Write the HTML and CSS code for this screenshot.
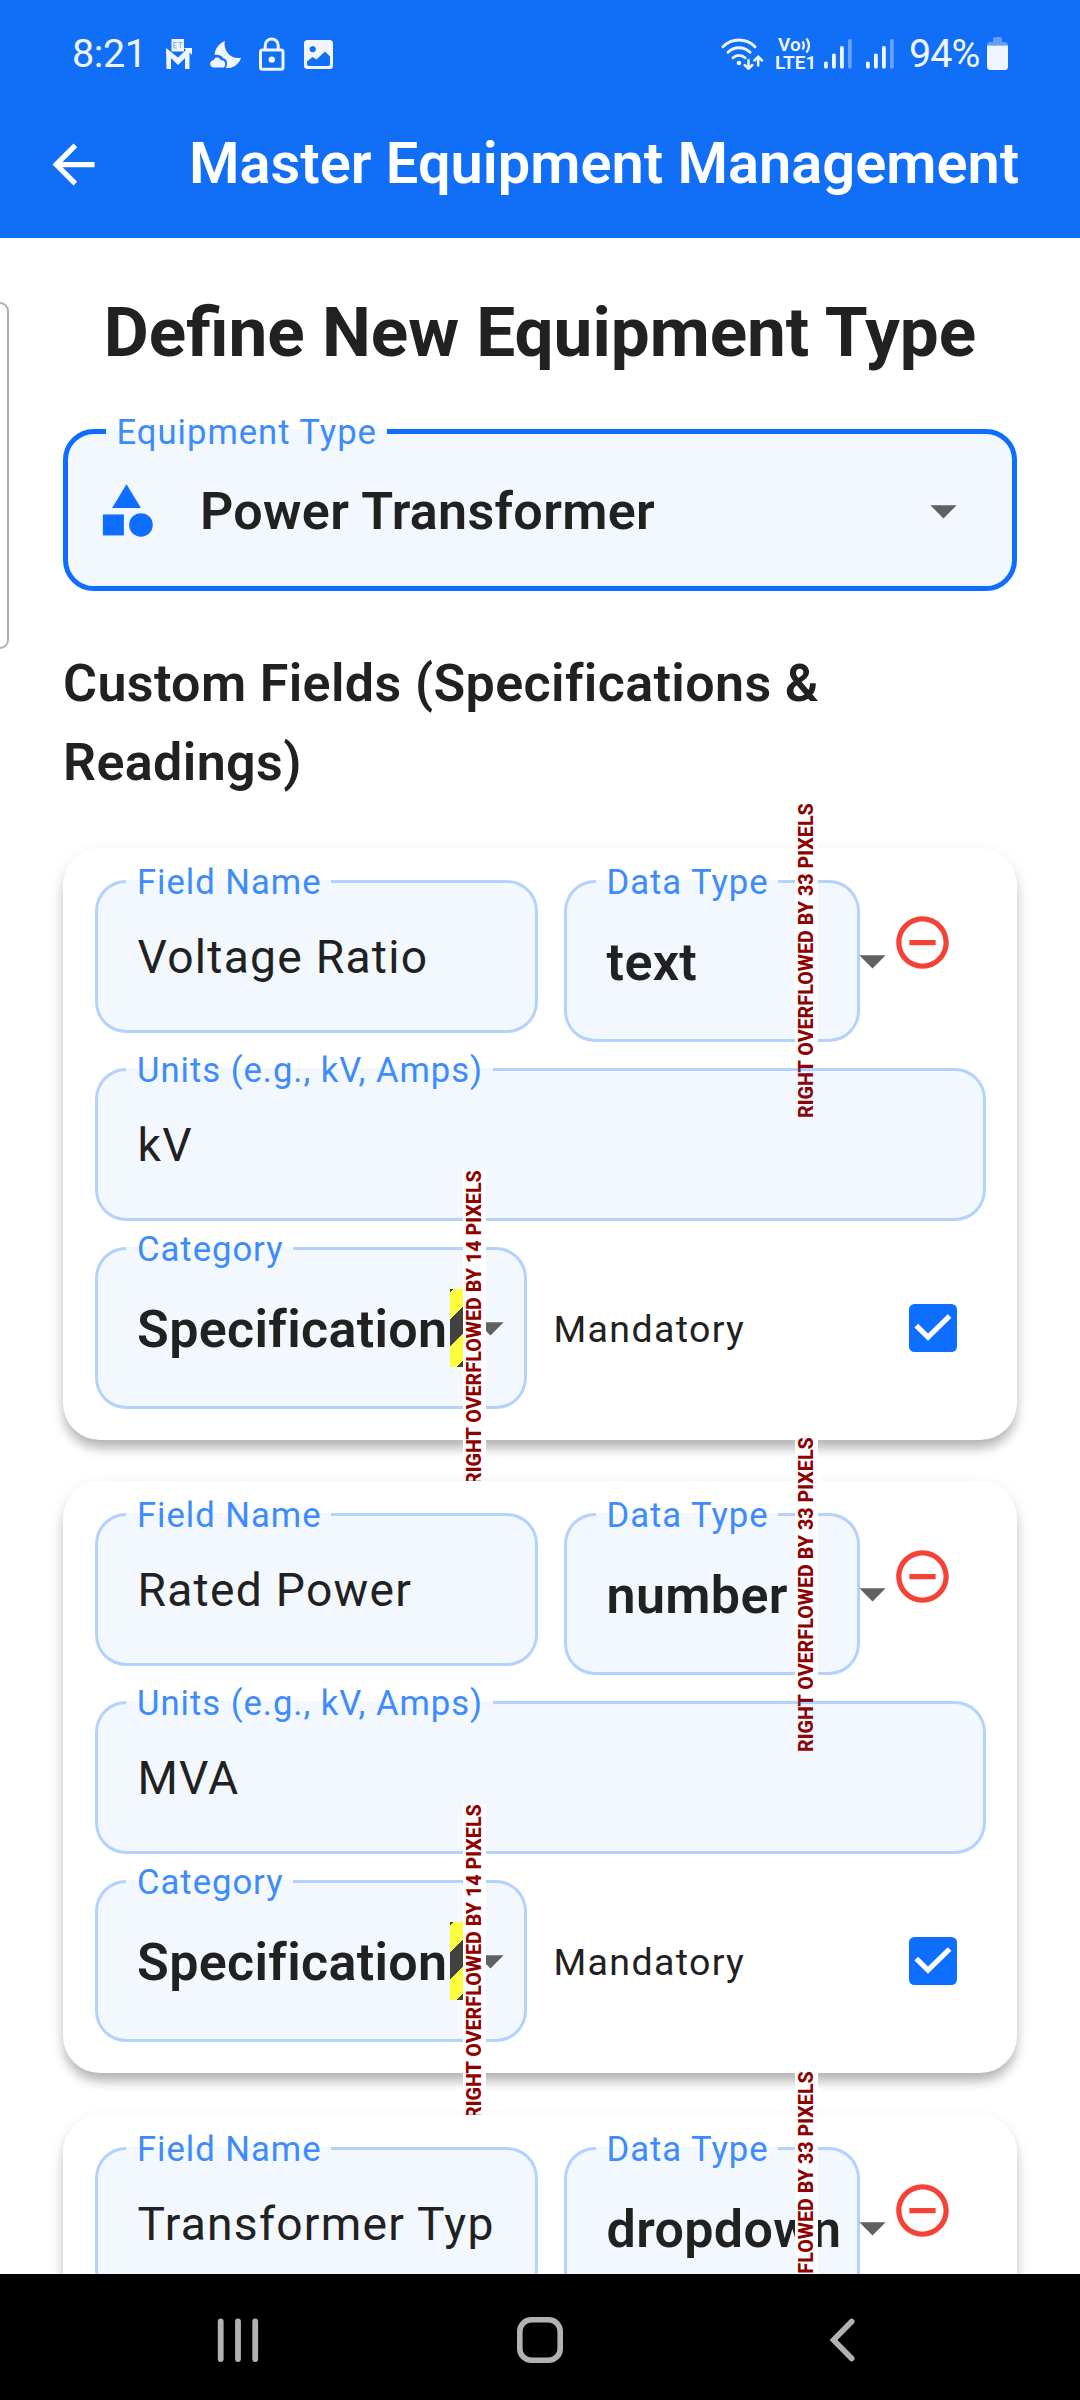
FILE: index.html
```html
<!DOCTYPE html>
<html lang="en">
<head>
<meta charset="utf-8">
<title>Master Equipment Management</title>
<link rel="stylesheet" href="styles.css">
</head>
<body>
<svg class="defs" aria-hidden="true">
  <symbol id="arrow-down" viewBox="0 0 24 24"><path d="M7 10l5 5 5-5z"/></symbol>
  <symbol id="remove" viewBox="0 0 24 24"><path d="M7 11v2h10v-2H7zm5-9C6.48 2 2 6.48 2 12s4.48 10 10 10 10-4.48 10-10S17.52 2 12 2zm0 18c-4.41 0-8-3.59-8-8s3.59-8 8-8 8 3.59 8 8-3.59 8-8 8z"/></symbol>
  <symbol id="check" viewBox="0 0 48 48"><rect width="48" height="48" rx="5.5" fill="#0d6eff"/><path d="M7.3 21.6L19 33.2 40.6 12" fill="none" stroke="#fff" stroke-width="5.2"/></symbol>
  <symbol id="signal" viewBox="0 0 28 30"><g fill="#f0f5ff"><rect x="0" y="22.5" width="3.8" height="7" rx="1.6"/><rect x="8" y="14.5" width="3.8" height="15" rx="1.6"/><rect x="16" y="7" width="3.8" height="22.5" rx="1.6"/><rect x="24" y="0" width="3.8" height="29.5" rx="1.6" opacity=".38"/></g></symbol>
</svg>
<div class="screen">
  <header class="header">
    <div class="status">
      <span class="clock">8:21</span>
      <svg class="i-mail" viewBox="0 0 26 30"><path fill="#f0f5ff" d="M5.5 0H18v12.5H5.5zM0 9l12 9.5L20 11l-2-2h8v7l-2.5-2.5V30H19V19l-7 7-7-7v11H.5z"/><path d="M7.500 3.500h3.500M7.500 6.200h3M7.500 9h3.500M7.800 3.500V9M12.300 3.500h4M14.300 3.500V9" stroke="#7fb0fb" fill="none"/></svg>
      <svg class="i-moon" viewBox="0 0 31 27"><path fill="#f0f5ff" d="M14.800 0c-6 2.600-10 8-10.200 14 3.500-.9 7 .5 8.600 3.300 3.500.6 5 4.800 3 8.700l-.8 1H19.500C25 26 29.500 22 31 16.700 22 19 13 11 14.800 0zM5 17c2.500-1.200 5 0 6 2.300 5-.4 5.500 5.500 2.500 7.200H3.500C-1 26-1 19.500 3.600 19.300z"/></svg>
      <svg class="i-lock" viewBox="0 0 26 34"><rect x="1.500" y="13" width="22.500" height="19.300" rx="2" fill="none" stroke="#f0f5ff" stroke-width="3"/><path d="M6.200 13V8.500a6.500 6.500 0 0 1 13 0V13" fill="none" stroke="#f0f5ff" stroke-width="3"/><circle cx="12.800" cy="22.600" r="3.200" fill="#f0f5ff"/></svg>
      <svg class="i-image" viewBox="0 0 29 29"><path fill="#f0f5ff" fill-rule="evenodd" d="M3.500 0h22A3.500 3.500 0 0 1 29 3.500v22a3.500 3.500 0 0 1-3.500 3.500h-22A3.500 3.500 0 0 1 0 25.500v-22A3.500 3.500 0 0 1 3.500 0zM8.700 6a3.100 3.100 0 1 0 .01 0zM3 21.500V24q0 2 2 2h19q2 0 2-2v-7.500L21 11.500l-8.500 8-4-2.500z"/></svg>
      <span class="spacer"></span>
      <svg class="i-wifi" viewBox="0 0 43 32"><g fill="none" stroke="#f0f5ff" stroke-width="2.900" stroke-linecap="round"><path d="M2 8.800C11-.3 25-.3 34 8.800M7 14.200c6.300-6 15.700-6 22 0M12 19.800c3.500-3.300 8.500-3.300 12 0"/><path d="M27.500 22v8M23.700 27l3.800 3.700 3.800-3.700M37.200 27.500v-8M33.400 22.500l3.800-3.700 3.800 3.700" stroke-width="2.500"/></g><circle cx="18" cy="25" r="2.300" fill="#f0f5ff"/></svg>
      <span class="volte"><span class="vo">Vo<svg viewBox="0 0 11 17"><path d="M1.500 4.500q2.800 4 0 8M5.500 1.500q5 7 0 14" fill="none" stroke="#f0f5ff" stroke-width="2.300"/></svg></span><span>LTE1</span></span>
      <svg class="i-signal"><use href="#signal"/></svg>
      <svg class="i-signal second"><use href="#signal"/></svg>
      <span class="percent">94%</span>
      <svg class="i-battery" viewBox="0 0 21 33"><path d="M6 5V2q0-2 2-2h5q2 0 2 2v3h2.500q3.500 0 3.500 3.500H0Q0 5 3.500 5z" fill="#fff" opacity=".35"/><path d="M0 8.500h21V29.500q0 3.500-3.500 3.500h-14Q0 33 0 29.500z" fill="#f0f5ff"/></svg>
    </div>
    <div class="appbar">
      <svg class="icon" viewBox="0 0 24 24"><path fill="#fff" d="M20 11H7.830l5.590-5.590L12 4l-8 8 8 8 1.410-1.410L7.830 13H20v-2z"/></svg>
      <span class="appbar-title">Master Equipment Management</span>
    </div>
  </header>

  <main class="content">
    <div class="edge-handle"></div>
    <h1>Define New Equipment Type</h1>
    <fieldset class="field equipment">
      <legend>Equipment Type</legend>
      <div class="select">
        <svg class="icon category" viewBox="0 0 24 24"><path d="M12 2l-5.500 9h11z"/><circle cx="17.500" cy="17.500" r="4.500"/><path d="M3 13.500h8v8H3z"/></svg>
        <span class="strong">Power Transformer</span>
        <svg class="icon caret"><use href="#arrow-down"/></svg>
      </div>
    </fieldset>
    <h2>Custom Fields (Specifications &amp; Readings)</h2>

    <section class="card">
      <div class="row top">
        <fieldset class="field name"><legend>Field Name</legend><div class="input">Voltage Ratio</div></fieldset>
        <div class="wrap type">
          <fieldset class="field drop"><legend>Data Type</legend><div class="select"><span class="strong">text</span></div></fieldset>
          <svg class="icon caret over"><use href="#arrow-down"/></svg>
          <span class="overflow">RIGHT OVERFLOWED BY 33 PIXELS</span>
        </div>
        <svg class="icon remove"><use href="#remove"/></svg>
      </div>
      <fieldset class="field units"><legend>Units (e.g., kV, Amps)</legend><div class="input">kV</div></fieldset>
      <div class="row">
        <div class="wrap cat">
          <fieldset class="field drop"><legend>Category</legend><div class="select"><span class="strong">Specification</span></div></fieldset>
          <svg class="icon caret over"><use href="#arrow-down"/></svg>
          <span class="stripes"></span>
          <span class="overflow">RIGHT OVERFLOWED BY 14 PIXELS</span>
        </div>
        <div class="mandatory"><span>Mandatory</span><svg class="checkbox"><use href="#check"/></svg></div>
      </div>
    </section>

    <section class="card">
      <div class="row top">
        <fieldset class="field name"><legend>Field Name</legend><div class="input">Rated Power</div></fieldset>
        <div class="wrap type">
          <fieldset class="field drop"><legend>Data Type</legend><div class="select"><span class="strong">number</span></div></fieldset>
          <svg class="icon caret over"><use href="#arrow-down"/></svg>
          <span class="overflow">RIGHT OVERFLOWED BY 33 PIXELS</span>
        </div>
        <svg class="icon remove"><use href="#remove"/></svg>
      </div>
      <fieldset class="field units"><legend>Units (e.g., kV, Amps)</legend><div class="input">MVA</div></fieldset>
      <div class="row">
        <div class="wrap cat">
          <fieldset class="field drop"><legend>Category</legend><div class="select"><span class="strong">Specification</span></div></fieldset>
          <svg class="icon caret over"><use href="#arrow-down"/></svg>
          <span class="stripes"></span>
          <span class="overflow">RIGHT OVERFLOWED BY 14 PIXELS</span>
        </div>
        <div class="mandatory"><span>Mandatory</span><svg class="checkbox"><use href="#check"/></svg></div>
      </div>
    </section>

    <section class="card">
      <div class="row top">
        <fieldset class="field name"><legend>Field Name</legend><div class="input">Transformer Typ</div></fieldset>
        <div class="wrap type">
          <fieldset class="field drop"><legend>Data Type</legend><div class="select"><span class="strong">dropdown</span></div></fieldset>
          <svg class="icon caret over"><use href="#arrow-down"/></svg>
          <span class="overflow">RIGHT OVERFLOWED BY 33 PIXELS</span>
        </div>
        <svg class="icon remove"><use href="#remove"/></svg>
      </div>
    </section>
  </main>

  <nav class="navbar">
    <svg viewBox="0 0 42 46"><path d="M3.700 4.400v37.600M21 4.400v37.600M38.200 4.400v37.600" stroke-width="5.800"/></svg>
    <svg class="home" viewBox="0 0 46 46"><rect x="2.800" y="2.800" width="40.400" height="40.400" rx="11.500" stroke-width="5.600"/></svg>
    <svg class="back" viewBox="0 0 26 46"><path d="M22.700 4.500L4.500 23l18.200 18.500" stroke-width="5.600"/></svg>
  </nav>
</div>
</body>
</html>
```
FILE: styles.css
```css
* { box-sizing: border-box; }
body { margin: 0; background: #fff; font-family: Roboto, sans-serif; color: #212122; }
.defs { position: absolute; width: 0; height: 0; }
svg { display: block; flex: none; }
.screen { width: 1080px; height: 2400px; display: flex; flex-direction: column; overflow: hidden; }
.icon { width: 63px; height: 63px; }

/* Header */
.header { flex: none; height: 238px; background: #116ef7; color: #fff; }
.status { height: 91px; padding: 0 72px 0 72px; display: flex; align-items: flex-start; color: #f0f5ff; font-size: 39.500px; line-height: 46px; white-space: nowrap; }
.clock { width: 94px; margin-top: 31px; letter-spacing: -.4px; }
.i-mail { width: 26px; height: 30px; margin-top: 39px; }
.i-moon { width: 31px; height: 27px; margin: 41px 0 0 18px; }
.i-lock { width: 26px; height: 34px; margin: 37px 0 0 18px; }
.i-image { width: 29px; height: 29px; margin: 40px 0 0 19px; }
.spacer { flex: 1; }
.i-wifi { width: 43px; height: 32px; margin: 38px 11px 0 0; }
.volte { width: 49px; margin-top: 36px; display: flex; flex-direction: column; font-size: 19px; font-weight: 600; line-height: 18px; }
.vo { display: flex; padding-left: 3px; }
.vo svg { width: 11px; height: 17px; margin-top: 1px; }
.i-signal { width: 28px; height: 30px; margin-top: 39px; }
.i-signal.second { margin-left: 14px; }
.percent { width: 77px; margin: 31px 0 0 15px; letter-spacing: -1px; }
.i-battery { width: 21px; height: 33px; margin: 37px 0 0 1px; }
.appbar { height: 147px; padding: 0 42px; display: flex; align-items: center; }
.appbar-title { margin: -4px 0 0 84px; font-size: 57.750px; font-weight: 600; line-height: 68px; white-space: nowrap; }

/* Page */
.content { flex: 1; min-height: 0; overflow: hidden; position: relative; padding: 54px 63px 0; }
.edge-handle { position: absolute; left: -10px; top: 64px; width: 19px; height: 347px; border: 2px solid #b0b0b0; border-radius: 9px; }
h1 { margin: 0 0 38px; font-size: 69.250px; font-weight: 700; line-height: 81px; text-align: center; white-space: nowrap; }
h2 { margin: 52.500px 0 46.400px; font-size: 52px; font-weight: 600; line-height: 79px; letter-spacing: .38px; }

/* Outlined fields */
.field { margin: 0; padding: 0; min-width: 0; border: 3px solid rgba(13, 110, 253, .28); border-radius: 31px; background: rgba(13, 110, 253, .05); }
.field legend { height: 41px; margin-left: 28.500px; padding: 1px 9.600px 0 11px; font-size: 34.650px; line-height: 41px; letter-spacing: .97px; color: #3d8bfd; white-space: nowrap; }
.equipment { height: 180px; border: 5px solid #0d6eff; }
.equipment legend { margin-left: 37.500px; }
.equipment .select { padding: 27px 37px 0 26.500px; }
.equipment .strong { margin: 3px 0 0 42.500px; }
.equipment .caret { margin-left: auto; }
.category { fill: #0d6eff; }
.caret { fill: #616161; }
.input { padding: 28px 0 0 40px; font-size: 46.200px; line-height: 54px; letter-spacing: 1.270px; white-space: nowrap; }
.select { display: flex; padding: 31px 0 0 39.600px; }
.strong { font-size: 52px; font-weight: 600; line-height: 60px; letter-spacing: .33px; white-space: nowrap; }

/* Field cards */
.card { position: relative; height: 592px; margin-bottom: 41.600px; padding: 13px 31.500px 0; display: flex; flex-direction: column; gap: 7px; border-radius: 37px; background: #fff; box-shadow: 0 10px 12px -2px rgba(0, 0, 0, .24), 0 5px 15px rgba(0, 0, 0, .1); }
.row { display: flex; height: 181px; }
.name { width: 443px; height: 172px; }
.wrap { position: relative; }
.type { width: 296px; margin-left: 26.500px; }
.cat { width: 432px; }
.drop { height: 181px; }
.caret.over { position: absolute; top: 68px; right: -44px; }
.cat .caret.over { right: 5px; top: 68px; }
.units { position: relative; height: 172px; }
.remove { margin: 50.600px 0 0 31px; fill: #f44336; }
.overflow { position: absolute; top: -57.500px; left: 231px; width: 23px; height: 315px; background: #fff; color: #900000; font-size: 19.690px; font-weight: 800; line-height: 23px; white-space: nowrap; writing-mode: vertical-rl; transform: rotate(180deg); }
.cat .overflow { left: 368px; }
.stripes { position: absolute; left: 355.500px; top: 61px; width: 14px; height: 78px; background: linear-gradient(135deg, #424242 2.800px, #fdfd40 2.800px 21.900px, #424242 21.900px 41px, #fdfd40 41px 60px, #424242 60px); }
.mandatory { flex: 1; display: flex; align-items: center; justify-content: space-between; padding: 21px 29px 0 27px; font-size: 37.500px; line-height: 44px; letter-spacing: 1.350px; }
.checkbox { width: 48px; height: 48px; margin-top: -2px; }

/* System navigation */
.navbar { flex: none; height: 126px; padding: 5px 0 0 216.500px; display: flex; align-items: center; background: #000; }
.navbar svg { width: 42px; height: 46px; fill: none; stroke: #b2b2b2; stroke-linecap: round; }
.navbar .home { width: 46px; margin-left: 258px; }
.navbar .back { width: 26px; margin-left: 266px; }
```
